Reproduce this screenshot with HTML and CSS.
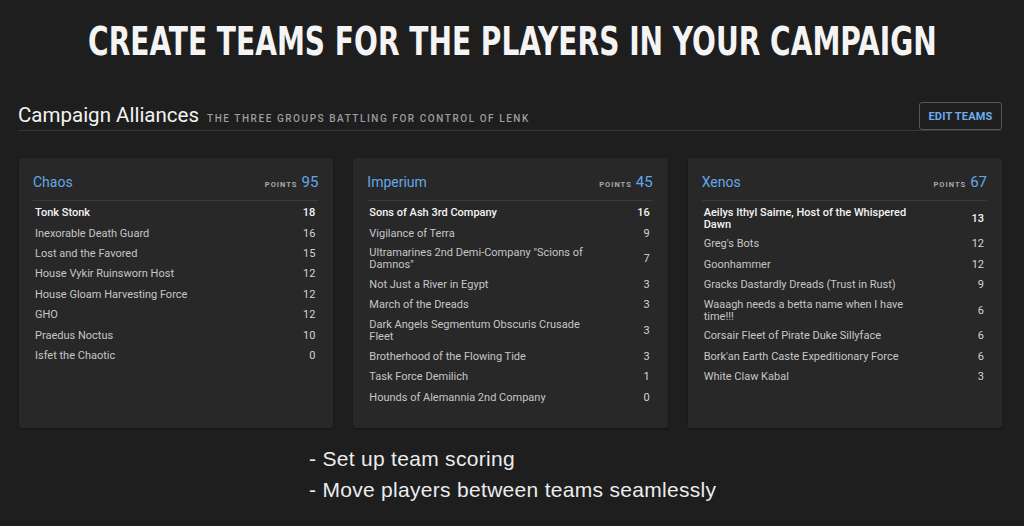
FILE: index.html
```html
<!DOCTYPE html>
<html lang="en">
<head>
<meta charset="utf-8">
<title>Campaign Alliances</title>
<link rel="stylesheet" href="styles.css">
</head>
<body>
<div class="page">
  <h1 class="hero"><span class="hero-text">CREATE TEAMS FOR THE PLAYERS IN YOUR CAMPAIGN</span></h1>

  <section class="panel">
    <header class="panel-head">
      <div class="panel-title">
        <span class="title">Campaign Alliances</span>
        <span class="sub">THE THREE GROUPS BATTLING FOR CONTROL OF LENK</span>
      </div>
      <button class="btn">EDIT TEAMS</button>
    </header>

    <div class="cards">
      <article class="card">
        <div class="card-head">
          <span class="team">Chaos</span>
          <span class="pts"><span class="pts-label">POINTS</span><span class="pts-val">95</span></span>
        </div>
        <ul class="rows">
          <li class="row lead"><span class="name">Tonk Stonk</span><span class="score">18</span></li>
          <li class="row"><span class="name">Inexorable Death Guard</span><span class="score">16</span></li>
          <li class="row"><span class="name">Lost and the Favored</span><span class="score">15</span></li>
          <li class="row"><span class="name">House Vykir Ruinsworn Host</span><span class="score">12</span></li>
          <li class="row"><span class="name">House Gloam Harvesting Force</span><span class="score">12</span></li>
          <li class="row"><span class="name">GHO</span><span class="score">12</span></li>
          <li class="row"><span class="name">Praedus Noctus</span><span class="score">10</span></li>
          <li class="row"><span class="name">Isfet the Chaotic</span><span class="score">0</span></li>
        </ul>
      </article>

      <article class="card">
        <div class="card-head">
          <span class="team">Imperium</span>
          <span class="pts"><span class="pts-label">POINTS</span><span class="pts-val">45</span></span>
        </div>
        <ul class="rows">
          <li class="row lead"><span class="name">Sons of Ash 3rd Company</span><span class="score">16</span></li>
          <li class="row"><span class="name">Vigilance of Terra</span><span class="score">9</span></li>
          <li class="row"><span class="name">Ultramarines 2nd Demi-Company "Scions of Damnos"</span><span class="score">7</span></li>
          <li class="row"><span class="name">Not Just a River in Egypt</span><span class="score">3</span></li>
          <li class="row"><span class="name">March of the Dreads</span><span class="score">3</span></li>
          <li class="row"><span class="name">Dark Angels Segmentum Obscuris Crusade Fleet</span><span class="score">3</span></li>
          <li class="row"><span class="name">Brotherhood of the Flowing Tide</span><span class="score">3</span></li>
          <li class="row"><span class="name">Task Force Demilich</span><span class="score">1</span></li>
          <li class="row"><span class="name">Hounds of Alemannia 2nd Company</span><span class="score">0</span></li>
        </ul>
      </article>

      <article class="card">
        <div class="card-head">
          <span class="team">Xenos</span>
          <span class="pts"><span class="pts-label">POINTS</span><span class="pts-val">67</span></span>
        </div>
        <ul class="rows">
          <li class="row lead"><span class="name">Aeilys Ithyl Sairne, Host of the Whispered Dawn</span><span class="score">13</span></li>
          <li class="row"><span class="name">Greg's Bots</span><span class="score">12</span></li>
          <li class="row"><span class="name">Goonhammer</span><span class="score">12</span></li>
          <li class="row"><span class="name">Gracks Dastardly Dreads (Trust in Rust)</span><span class="score">9</span></li>
          <li class="row"><span class="name">Waaagh needs a betta name when I have time!!!</span><span class="score">6</span></li>
          <li class="row"><span class="name">Corsair Fleet of Pirate Duke Sillyface</span><span class="score">6</span></li>
          <li class="row"><span class="name">Bork'an Earth Caste Expeditionary Force</span><span class="score">6</span></li>
          <li class="row"><span class="name">White Claw Kabal</span><span class="score">3</span></li>
        </ul>
      </article>
    </div>
  </section>

  <div class="notes">
    <p>- Set up team scoring</p>
    <p>- Move players between teams seamlessly</p>
  </div>
</div>
</body>
</html>
```

FILE: styles.css
```css
* { box-sizing: border-box; }

html, body {
  margin: 0;
  padding: 0;
  background: #1e1e1e;
}

body {
  font-family: Roboto, "Liberation Sans", sans-serif;
  color: #e0e0e0;
  width: 1024px;
  height: 526px;
  overflow: hidden;
}

.hero {
  display: flex;
  justify-content: center;
  margin: 22px 0 0;
  font-family: "DejaVu Sans Condensed", "DejaVu Sans", sans-serif;
  font-weight: 700;
  font-size: 39px;
  line-height: 39px;
  color: #f4f4f4;
}

.hero-text {
  flex: none;
  white-space: nowrap;
  transform: scaleX(0.8);
  transform-origin: center;
}

.panel {
  margin: 41px 22px 0 18px;
}

.panel-head {
  display: flex;
  justify-content: space-between;
  align-items: flex-end;
  border-bottom: 1px solid #363636;
}

.panel-title {
  display: flex;
  align-items: baseline;
  padding-bottom: 3px;
}

.title {
  font-size: 20.5px;
  line-height: 24px;
  color: #f2f2f2;
}

.sub {
  margin-left: 8px;
  font-size: 10px;
  font-weight: 500;
  letter-spacing: 1.55px;
  color: #9c9c9c;
}

.btn {
  height: 28px;
  width: 83px;
  padding: 0;
  background: transparent;
  border: 1px solid #4b5866;
  border-radius: 3px;
  color: #6fabeb;
  font-family: Roboto, sans-serif;
  font-weight: 700;
  font-size: 11px;
  letter-spacing: 0.2px;
}

.cards {
  display: grid;
  grid-template-columns: repeat(3, 1fr);
  gap: 20px;
  margin: 27px 0 0 1px;
}

.card {
  height: 270px;
  background: #282828;
  border-radius: 3px;
  padding: 14px 15px 14px 14px;
  box-shadow: 0 1px 2px rgba(0, 0, 0, 0.35);
}

.card-head {
  display: flex;
  justify-content: space-between;
  align-items: center;
  height: 20px;
  margin-bottom: 8px;
}

.team {
  font-size: 14px;
  color: #64a7e8;
}

.pts {
  display: flex;
  align-items: baseline;
}

.pts-label {
  font-size: 7.5px;
  font-weight: 700;
  letter-spacing: 1px;
  color: #a9a9a9;
  margin-right: 4px;
}

.pts-val {
  font-size: 15px;
  color: #64a7e8;
}

.rows {
  list-style: none;
  margin: 0;
  padding: 2px 0 0;
  border-top: 1px solid #3a3a3a;
}

.row {
  display: flex;
  justify-content: space-between;
  align-items: center;
  min-height: 20.4px;
  padding: 3.5px 3px 3.5px 2px;
  font-size: 11px;
  line-height: 12px;
  color: #c6c6c6;
}

.name {
  max-width: 222px;
}

.score {
  color: #d4d4d4;
}

.lead .name,
.lead .score {
  color: #f4f4f4;
  font-weight: 500;
}

.notes {
  margin-top: 15px;
  padding-left: 309px;
}

.notes p {
  margin: 0;
  font-family: "Liberation Sans", sans-serif;
  font-size: 21px;
  line-height: 31px;
  letter-spacing: 0.3px;
  color: #ececec;
}
```
